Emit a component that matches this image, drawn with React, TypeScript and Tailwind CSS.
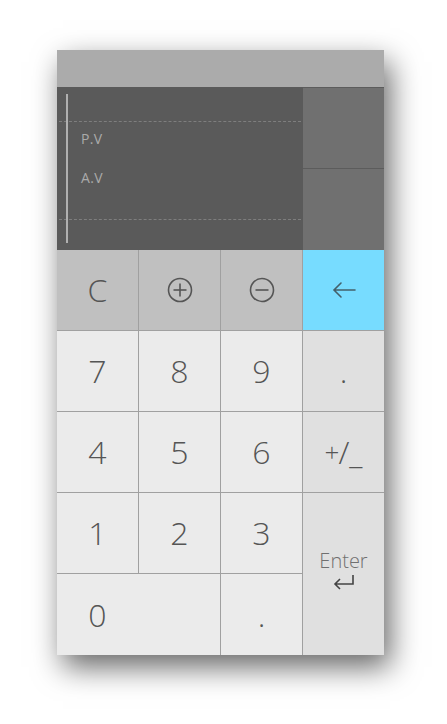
import React from "react";

const font = { fontFamily: '"Open Sans", "Noto Sans", sans-serif' };

function CirclePlus({ minus = false }: { minus?: boolean }) {
  return (
    <svg width="26" height="26" viewBox="0 0 26 26" fill="none" stroke="#555" strokeWidth={1.6}>
      <circle cx="13" cy="13" r="11.5" />
      <path d="M6.5 13h13" />
      {!minus && <path d="M13 6.5v13" />}
    </svg>
  );
}

function Key({ children, className = "" }: { children: React.ReactNode; className?: string }) {
  return (
    <button className={`flex items-center justify-center text-[32px] font-light text-[#555] leading-none ${className}`}>
      {children}
    </button>
  );
}

export default function App() {
  return (
    <div className="min-h-[724px] bg-white pl-[57px] pt-[50px]" style={font}>
      <div className="w-[327px] shadow-[6px_12px_28px_rgba(0,0,0,0.6)]">
        {/* title bar */}
        <div className="h-[37px] bg-[#ababab]" />

        {/* display */}
        <div className="flex h-[163px]">
          <div className="relative flex-1 bg-[#5a5a5a] flex flex-col">
            <div className="absolute left-[9px] top-[7px] bottom-[7px] w-[2px] bg-[#b0b0b0]" />
            <div className="h-[34px]" />
            <div className="border-t border-dashed border-[#7e7e7e] mx-[2px]" />
            <div className="h-[97px] pl-[24px] pt-[7px] text-[14px] leading-[20px] tracking-wide text-[#aaa]">
              <div>P.V</div>
              <div className="mt-[19px]">A.V</div>
            </div>
            <div className="border-t border-dashed border-[#7e7e7e] mx-[2px]" />
          </div>
          <div className="w-[81px] flex flex-col">
            <div className="h-[81px] bg-[#707070] border-t border-[#5c5c5c]" />
            <div className="flex-1 bg-[#707070] border-t border-[#5c5c5c]" />
          </div>
        </div>

        {/* keypad */}
        <div className="grid grid-cols-4 grid-rows-[80px_80px_80px_80px_81px] gap-px bg-[#a0a0a0]">
          <Key className="bg-[#c0c0c0]">C</Key>
          <Key className="bg-[#c0c0c0]"><CirclePlus /></Key>
          <Key className="bg-[#c0c0c0]"><CirclePlus minus /></Key>
          <Key className="bg-[#77dcff]">
            <svg width="24" height="18" viewBox="0 0 24 18" fill="none" stroke="#44606b" strokeWidth={1.6} strokeLinecap="round">
              <path d="M2 9h21M9 2L2 9l7 7" />
            </svg>
          </Key>

          <Key className="bg-[#ebebeb]">7</Key>
          <Key className="bg-[#ebebeb]">8</Key>
          <Key className="bg-[#ebebeb]">9</Key>
          <Key className="bg-[#e0e0e0]">.</Key>

          <Key className="bg-[#ebebeb]">4</Key>
          <Key className="bg-[#ebebeb]">5</Key>
          <Key className="bg-[#ebebeb]">6</Key>
          <Key className="bg-[#e0e0e0] text-[32px]">
            <span className="align-[9px] text-[26px]">+</span>
            <span className="-ml-[1px]">/</span>
            <span className="align-[-2px]">_</span>
          </Key>

          <Key className="bg-[#ebebeb]">1</Key>
          <Key className="bg-[#ebebeb]">2</Key>
          <Key className="bg-[#ebebeb]">3</Key>
          <button className="row-span-2 bg-[#e0e0e0] flex flex-col items-center justify-center pb-[10px]">
            <span className="text-[20px] font-light leading-[24px] text-[#707070]">Enter</span>
            <svg width="24" height="16" viewBox="0 0 24 16" fill="none" stroke="#444" strokeWidth={1.6} className="mt-[1px]">
              <path d="M21 1v9H3M8 5l-5 5 5 5" />
            </svg>
          </button>

          <div className="col-span-2 bg-[#ebebeb] flex">
            <Key className="w-[81px]">0</Key>
          </div>
          <Key className="bg-[#ebebeb]">.</Key>
        </div>
      </div>
    </div>
  );
}
